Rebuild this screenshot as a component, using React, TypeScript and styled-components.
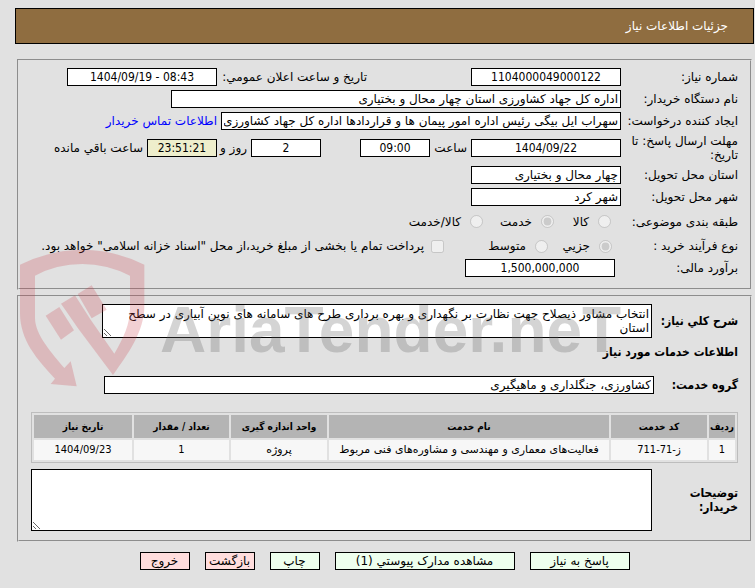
import React from "react";
import styled, { createGlobalStyle } from "styled-components";

const textFont = `"DejaVu Sans", sans-serif`;
const narrowFont = `"DejaVu Sans Condensed", "DejaVu Sans", sans-serif`;

const GlobalStyle = createGlobalStyle`
  *, *::before, *::after { box-sizing: border-box; }
  body {
    margin: 0;
    background: #e1e1e1;
    color: #000;
    font: 12px/14px ${textFont};
  }
  button, input, textarea { font: inherit; color: inherit; }
`;

const Page = styled.main`
  padding: 8px 1px 16px 15px;
`;

const TitleBar = styled.h1`
  display: flex;
  align-items: center;
  height: 36px;
  margin: 0 0 15px;
  padding: 0 25px;
  border: 1px solid #000;
  background: #8f6d40;
  color: #fff;
  font-size: 12px;
  font-weight: 400;
`;

const Panels = styled.div`
  position: relative;
  display: flex;
  flex-direction: column;
  gap: 5px;
  margin: 0 2px;
`;

const Panel = styled.section`
  border: 2px groove #e1e1e1;
  padding: 5px 12px 9px;
`;

const Row = styled.div<{ $h?: number }>`
  display: flex;
  align-items: center;
  min-height: ${(p) => p.$h ?? 22}px;
`;

const Label = styled.label<{ $bold?: boolean; $w?: number }>`
  flex: none;
  width: ${(p) => p.$w ?? 117}px;
  font-family: ${(p) => (p.$bold ? narrowFont : textFont)};
  font-weight: ${(p) => (p.$bold ? 700 : 400)};
`;

const SideText = styled.label<{ $w?: number }>`
  flex: none;
  white-space: nowrap;
  width: ${(p) => (p.$w ? `${p.$w}px` : "auto")};
  margin-inline: 4px;
`;

const Field = styled.input<{ $w?: number; $number?: boolean; $tint?: boolean }>`
  flex: ${(p) => (p.$w ? "none" : "1")};
  min-width: 0;
  width: ${(p) => (p.$w ? `${p.$w}px` : "auto")};
  height: 18px;
  margin: 0;
  padding: 0 2px;
  border: 1px solid #000;
  border-radius: 0;
  background: ${(p) => (p.$tint ? "#eeeecc" : "#fff")};
  font-family: ${(p) => (p.$number ? narrowFont : textFont)};
  text-align: ${(p) => (p.$number ? "center" : "start")};
`;

const Spacer = styled.span<{ $w: number }>`
  flex: none;
  width: ${(p) => p.$w}px;
`;

const Link = styled.a`
  flex: none;
  margin-inline-start: 4px;
  color: #00f;
  text-decoration: none;
  white-space: nowrap;
`;

const Choice = styled.label<{ $w?: number; $gap?: number }>`
  flex: none;
  display: flex;
  align-items: center;
  gap: ${(p) => p.$gap ?? 9}px;
  white-space: nowrap;
  width: ${(p) => (p.$w ? `${p.$w}px` : "auto")};
  input { margin: 0; width: 13px; height: 13px; flex: none; }
`;

const Area = styled.textarea<{ $h: number }>`
  flex: 1;
  min-width: 0;
  height: ${(p) => p.$h}px;
  margin: 0;
  padding: 2px;
  border: 1px solid #000;
  border-radius: 0;
  background: #fff;
  resize: both;
  overflow: hidden;
`;

const Heading = styled.h2`
  margin: 0;
  padding: 5px 0;
  font: 700 12px/14px ${narrowFont};
`;

const Table = styled.table`
  width: 100%;
  margin: 6px 0;
  border: 1px solid #bdbdbd;
  border-collapse: separate;
  border-spacing: 2px;
  table-layout: fixed;
  text-align: center;
  font-size: 11px;
  white-space: nowrap;
  th, td { padding: 0; }
  th { height: 23px; background: #b4b4b4; font: 700 10px/14px ${narrowFont}; }
  td { height: 20px; background: #f7f7f7; }
`;

const Numeric = styled.span`
  font-family: ${narrowFont};
`;

const Actions = styled.div`
  display: flex;
  justify-content: center;
  gap: 15px;
  margin-top: 10px;
`;

const Action = styled.button<{ $w: number; $leave?: boolean }>`
  width: ${(p) => p.$w}px;
  height: 18px;
  padding: 0;
  border: 1px solid #000;
  background: ${(p) => (p.$leave ? "#ffdddd" : "#eeffee")};
  white-space: nowrap;
`;

const Watermark = styled.div`
  position: absolute;
  inset: 190px auto auto 3px;
  display: flex;
  align-items: flex-start;
  gap: 15px;
  direction: ltr;
  pointer-events: none;
  svg { flex: none; }
`;

const Brand = styled.span`
  padding-top: 41px;
  color: rgba(100, 100, 100, 0.28);
  font: 700 64px/80px "Liberation Sans", sans-serif;
  white-space: nowrap;
`;

const columns = [
  { title: "ردیف", width: 26, value: "1", numeric: true },
  { title: "کد خدمت", width: 96, value: "ز-71-711", numeric: true },
  { title: "نام خدمت", value: "فعالیت‌های معماری و مهندسی و مشاوره‌های فنی مربوط" },
  { title: "واحد اندازه گیری", width: 96, value: "پروژه" },
  { title: "تعداد / مقدار", width: 95, value: "1", numeric: true },
  { title: "تاریخ نیاز", width: 98, value: "1404/09/23", numeric: true },
];

export default function App() {
  return (
    <Page dir="rtl" lang="fa">
      <GlobalStyle />
      <TitleBar>جزئیات اطلاعات نیاز</TitleBar>
      <Panels>
        <Panel>
          <Row>
            <Label htmlFor="no">شماره نیاز:</Label>
            <Field id="no" $w={150} $number readOnly value="1104000049000122" />
            <Spacer $w={100} />
            <SideText htmlFor="announced" $w={146}>تاریخ و ساعت اعلان عمومي:</SideText>
            <Field id="announced" $w={150} $number readOnly dir="ltr" value="1404/09/19 - 08:43" />
          </Row>
          <Row>
            <Label htmlFor="org">نام دستگاه خریدار:</Label>
            <Field id="org" $w={450} readOnly value="اداره کل جهاد کشاورزی استان چهار محال و بختیاری" />
          </Row>
          <Row>
            <Label htmlFor="creator">ایجاد کننده درخواست:</Label>
            <Field id="creator" $w={400} readOnly value="سهراب ایل بیگی رئیس اداره امور پیمان ها و قراردادها اداره کل جهاد کشاورزی استان چهار محال و بختیاری" />
            <Link href="#contact">اطلاعات تماس خریدار</Link>
          </Row>
          <Row $h={32}>
            <Label htmlFor="deadline">مهلت ارسال پاسخ: تا تاریخ:</Label>
            <Field id="deadline" $w={150} $number readOnly value="1404/09/22" />
            <SideText htmlFor="hour" $w={33}>ساعت</SideText>
            <Field id="hour" $w={70} $number readOnly value="09:00" />
            <Spacer $w={39} />
            <Field id="days" $w={70} $number readOnly value="2" />
            <SideText htmlFor="days" $w={26}>روز و</SideText>
            <Field id="left" $w={70} $number $tint readOnly value="23:51:21" />
            <SideText htmlFor="left">ساعت باقي مانده</SideText>
          </Row>
          <Row>
            <Label htmlFor="province">استان محل تحویل:</Label>
            <Field id="province" $w={150} readOnly value="چهار محال و بختیاری" />
          </Row>
          <Row>
            <Label htmlFor="city">شهر محل تحویل:</Label>
            <Field id="city" $w={150} readOnly value="شهر کرد" />
          </Row>
          <Row $h={27}>
            <Label as="span">طبقه بندی موضوعی:</Label>
            <Spacer $w={10} />
            <Choice $w={57}><input type="radio" name="kind" disabled />کالا</Choice>
            <Choice $w={71}><input type="radio" name="kind" disabled defaultChecked />خدمت</Choice>
            <Choice><input type="radio" name="kind" disabled />کالا/خدمت</Choice>
          </Row>
          <Row>
            <Label as="span">نوع فرآیند خرید :</Label>
            <Spacer $w={9} />
            <Choice $w={64}><input type="radio" name="process" disabled defaultChecked />جزیي</Choice>
            <Choice $w={104}><input type="radio" name="process" disabled />متوسط</Choice>
            <Choice $gap={7}><input type="checkbox" disabled />پرداخت تمام یا بخشی از مبلغ خرید،از محل "اسناد خزانه اسلامی" خواهد بود.</Choice>
          </Row>
          <Row>
            <Label htmlFor="estimate">برآورد مالی:</Label>
            <Spacer $w={6} />
            <Field id="estimate" $w={150} $number readOnly value="1,500,000,000" />
          </Row>
        </Panel>

        <Panel>
          <Row $h={38}>
            <Label htmlFor="summary" $bold $w={86}>شرح کلي نیاز:</Label>
            <Area id="summary" $h={34} readOnly value="انتخاب مشاور ذیصلاح جهت نظارت بر نگهداری و بهره برداری طرح های سامانه های نوین آبیاری در سطح استان" />
            <Spacer $w={71} />
          </Row>
          <Heading>اطلاعات خدمات مورد نیاز</Heading>
          <Row $h={42}>
            <Label htmlFor="group" $bold $w={84}>گروه خدمت:</Label>
            <Field id="group" readOnly value="کشاورزی، جنگلداری و ماهیگیری" />
            <Spacer $w={73} />
          </Row>
          <Table>
            <colgroup>
              {columns.map((c) => <col key={c.title} width={c.width} />)}
            </colgroup>
            <thead>
              <tr>{columns.map((c) => <th key={c.title} scope="col">{c.title}</th>)}</tr>
            </thead>
            <tbody>
              <tr>
                {columns.map((c) => (
                  <td key={c.title}>{c.numeric ? <Numeric>{c.value}</Numeric> : c.value}</td>
                ))}
              </tr>
            </tbody>
          </Table>
          <Row>
            <Label htmlFor="notes" $bold $w={86}>توضیحات خریدار:</Label>
            <Area id="notes" $h={62} readOnly value="" />
          </Row>
        </Panel>

        <Watermark aria-hidden="true">
          <svg width="125" height="138" viewBox="60 58 375 414" fill="#c83c46" fillOpacity="0.24">
            <path d="M60 105Q155 60 247 60Q340 60 433 105V230C433 305 385 372 339 436L235 297L183 222L225 197L272 270L343 372C370 325 390 285 390 235V138Q320 103 247 103Q170 103 105 138V265C105 315 155 370 193 415L212 395L230 470L152 463L165 447C110 390 60 330 60 250Z" />
            <path d="M137 258L178 232L222 302L183 330Z" />
            <path d="M233 193L275 167L320 240L275 266Z" />
          </svg>
          <Brand>AriaTender.neT</Brand>
        </Watermark>
      </Panels>
      <Actions>
        <Action type="button" $w={100}>پاسخ به نیاز</Action>
        <Action type="button" $w={180}>مشاهده مدارک پیوستي (1)</Action>
        <Action type="button" $w={50}>چاپ</Action>
        <Action type="button" $w={50} $leave>بازگشت</Action>
        <Action type="button" $w={50} $leave>خروج</Action>
      </Actions>
    </Page>
  );
}
